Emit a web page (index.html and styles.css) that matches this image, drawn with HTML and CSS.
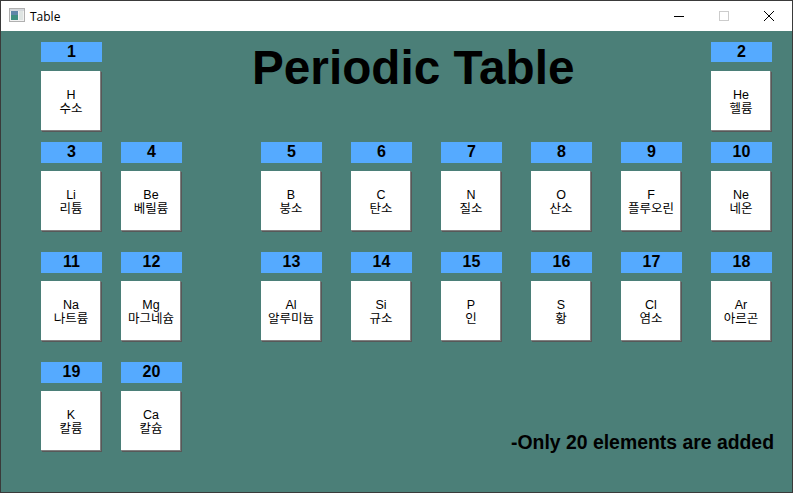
FILE: index.html
```html
<!DOCTYPE html>
<html lang="ko">
<head>
    <meta charset="UTF-8">
    <title>Table</title>
    <link rel="stylesheet" href="styles.css">
</head>
<body>
    <div class="window">
        <div class="titlebar">
            <svg class="app-icon" width="16" height="16" viewBox="0 1 16 16">
                <rect x="0.5" y="1.5" width="15" height="13" fill="#f2f2f2" stroke="#b0b0b0"/>
                <rect x="1" y="2" width="14" height="2" fill="#d4d8dc"/>
                <rect x="2" y="4" width="7" height="9" fill="#3f8f7f"/>
                <rect x="2" y="4" width="7" height="4" fill="#5f86a8"/>
                <rect x="10" y="4" width="4" height="9" fill="#dfe5e3"/>
            </svg>
            <span class="window-title">Table</span>
            <div class="controls">
                <div class="control">
                    <svg width="12" height="12" viewBox="0 0 12 12"><path d="M1 6.5H11" stroke="#000" fill="none"/></svg>
                </div>
                <div class="control">
                    <svg width="12" height="12" viewBox="0 0 12 12"><rect x="1.5" y="1.5" width="9" height="9" stroke="#ccc" fill="none"/></svg>
                </div>
                <div class="control close">
                    <svg width="12" height="12" viewBox="0 0 12 12"><path d="M1 1L11 11M11 1L1 11" stroke="#000" fill="none"/></svg>
                </div>
            </div>
        </div>

        <div class="table">
            <div class="cell c1"><div class="num short">1</div><button class="element">H<br>수소</button></div>
            <h1 class="heading">Periodic Table</h1>
            <div class="cell c8"><div class="num short">2</div><button class="element">He<br>헬륨</button></div>

            <div class="cell c1"><div class="num">3</div><button class="element">Li<br>리튬</button></div>
            <div class="cell c2"><div class="num">4</div><button class="element">Be<br>베릴륨</button></div>
            <div class="cell c3"><div class="num">5</div><button class="element">B<br>붕소</button></div>
            <div class="cell c4"><div class="num">6</div><button class="element">C<br>탄소</button></div>
            <div class="cell c5"><div class="num">7</div><button class="element">N<br>질소</button></div>
            <div class="cell c6"><div class="num">8</div><button class="element">O<br>산소</button></div>
            <div class="cell c7"><div class="num">9</div><button class="element">F<br>플루오린</button></div>
            <div class="cell c8"><div class="num">10</div><button class="element">Ne<br>네온</button></div>

            <div class="cell c1"><div class="num">11</div><button class="element">Na<br>나트륨</button></div>
            <div class="cell c2"><div class="num">12</div><button class="element">Mg<br>마그네슘</button></div>
            <div class="cell c3"><div class="num">13</div><button class="element">Al<br>알루미늄</button></div>
            <div class="cell c4"><div class="num">14</div><button class="element">Si<br>규소</button></div>
            <div class="cell c5"><div class="num">15</div><button class="element">P<br>인</button></div>
            <div class="cell c6"><div class="num">16</div><button class="element">S<br>황</button></div>
            <div class="cell c7"><div class="num">17</div><button class="element">Cl<br>염소</button></div>
            <div class="cell c8"><div class="num">18</div><button class="element">Ar<br>아르곤</button></div>

            <div class="cell c1"><div class="num">19</div><button class="element">K<br>칼륨</button></div>
            <div class="cell c2"><div class="num">20</div><button class="element">Ca<br>칼슘</button></div>
            <p class="note">-Only 20 elements are added</p>
        </div>
    </div>
</body>
</html>
```

FILE: styles.css
```css
html, body {
    margin: 0;
    height: 100%;
}

.window {
    box-sizing: border-box;
    width: 793px;
    height: 493px;
    display: flex;
    flex-direction: column;
    border: 1px solid #3a3a3a;
    background-color: #4b7f78;
    font-family: "Liberation Sans", "Noto Sans CJK KR", sans-serif;
}

.titlebar {
    height: 30px;
    flex: none;
    display: flex;
    align-items: center;
    padding-left: 8px;
    background-color: #fff;
}

.app-icon {
    margin-right: 5px;
}

.window-title {
    font-family: "Open Sans", "Liberation Sans", sans-serif;
    font-size: 12px;
    color: #000;
}

.controls {
    display: flex;
    margin-left: auto;
}

.control {
    width: 45px;
    height: 30px;
    display: flex;
    align-items: center;
    justify-content: center;
}

.close {
    width: 46px;
}

.table {
    display: grid;
    grid-template-columns: 80px 140px 90px 90px 90px 90px 90px 61px;
    grid-template-rows: 100px 110px 110px 92px;
    padding: 11px 0 0 40px;
}

.c1 { grid-column: 1; }
.c2 { grid-column: 2; }
.c3 { grid-column: 3; }
.c4 { grid-column: 4; }
.c5 { grid-column: 5; }
.c6 { grid-column: 6; }
.c7 { grid-column: 7; }
.c8 { grid-column: 8; }

.cell {
    display: flex;
    flex-direction: column;
    align-items: flex-start;
    gap: 8px;
}

.num {
    width: 61px;
    height: 21px;
    line-height: 20px;
    background-color: #55aaff;
    color: #000;
    text-align: center;
    font-size: 16px;
    font-weight: bold;
}

.short {
    height: 20px;
    margin-bottom: 1px;
}

.element {
    box-sizing: border-box;
    width: 60px;
    height: 60px;
    padding: 1px 0 0;
    border: none;
    background-color: #fff;
    box-shadow: 1px 1px 0 #585858, inset -1px -1px 0 #808080;
    color: #000;
    font-family: "Liberation Sans", "Noto Sans CJK KR", sans-serif;
    font-size: 12.5px;
    line-height: 14px;
}

.heading {
    grid-column: 2 / 8;
    margin: 0;
    padding-left: 131px;
    font-size: 47.7px;
    line-height: 52px;
    color: #000;
}

.note {
    grid-column: 3 / 9;
    justify-self: end;
    align-self: end;
    margin: 0 -2px 0 0;
    font-size: 19.4px;
    font-weight: bold;
    line-height: 23px;
    color: #000;
}
```
